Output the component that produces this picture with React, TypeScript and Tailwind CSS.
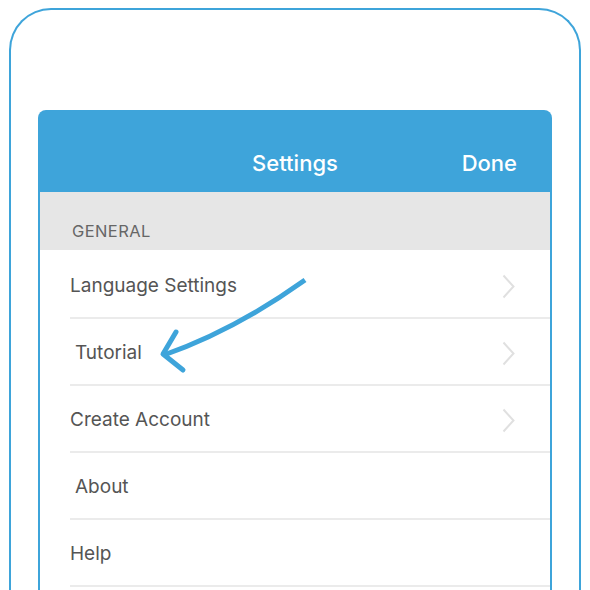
const rows = [
  { label: 'Language Settings', chevron: true, indent: false },
  { label: 'Tutorial', chevron: true, indent: true },
  { label: 'Create Account', chevron: true, indent: false },
  { label: 'About', chevron: false, indent: true },
  { label: 'Help', chevron: false, indent: false },
];

function Chevron() {
  return (
    <svg className="mr-[35px]" width="13" height="25" viewBox="0 0 13 25">
      <polyline points="1.5,1.5 11.5,12.5 1.5,23.5" fill="none" stroke="#e0e0e0" strokeWidth="2" />
    </svg>
  );
}

export default function App() {
  return (
    <div className="w-[590px] h-[590px] overflow-hidden bg-white pt-[8px] px-[9px] font-['Inter',sans-serif]">
      {/* phone outline */}
      <div className="h-[640px] rounded-t-[42px] border-2 border-b-0 border-[#3ea4da] px-[27px] pt-[100px]">
        <div className="relative rounded-t-[8px] overflow-hidden">
          <div className="h-[82px] bg-[#3ea4da] grid grid-cols-3 items-start pt-[40px] text-white text-[22px] leading-[26px] font-medium">
            <div />
            <div className="text-center">Settings</div>
            <div className="text-right pr-[35px]">Done</div>
          </div>
          <div className="border-x-2 border-[#3ea4da] h-[500px]">
            <div className="h-[58px] bg-[#e6e6e6] pl-[32px] pt-[29px] text-[16.5px] leading-[20px] tracking-[0.4px] text-[#666]">
              GENERAL
            </div>
            <div className="pt-[2px]">
              {rows.map((row) => (
                <div key={row.label} className="ml-[30px] h-[67px] pt-[4px] border-b-2 border-[#ebebeb] flex items-center justify-between">
                  <span className={`text-[19px] text-[#555] ${row.indent ? 'pl-[5px]' : ''}`}>{row.label}</span>
                  {row.chevron && <Chevron />}
                </div>
              ))}
            </div>
          </div>
          {/* hint arrow */}
          <svg className="absolute left-0 top-0" width="514" height="300" viewBox="38 110 514 300">
            <path d="M305 280 Q 235 330 164 355" fill="none" stroke="#3ea4da" strokeWidth="5" />
            <path d="M176 332 L163 354 L183 370" fill="none" stroke="#3ea4da" strokeWidth="5" strokeLinecap="round" strokeLinejoin="round" />
          </svg>
        </div>
      </div>
    </div>
  );
}
